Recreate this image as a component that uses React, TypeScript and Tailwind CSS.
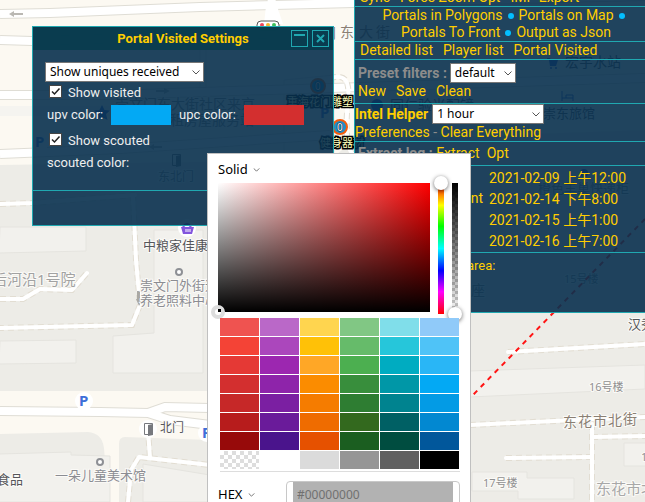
import React from 'react';

const ROBOTO = "font-['Roboto','Noto_Sans_CJK_SC',sans-serif]";
const NOTO = "font-['Noto_Sans','Noto_Sans_CJK_SC',sans-serif]";

type Label = { x: number; y: number; t: string; s?: number; c?: string };

const labels: Label[] = [
  { x: 115, y: 109, t: '崇文门东大街社区来京', s: 14 },
  { x: 170, y: 125, t: '租房屋服务站', s: 14 },
  { x: 158, y: 181, t: '东北门', s: 12 },
  { x: 565, y: 67, t: '宏宇水站', s: 14, c: '#55565a' },
  { x: 390, y: 110, t: '同仁验光配镜', s: 14, c: '#55565a' },
  { x: 543, y: 118, t: '崇东旅馆', s: 13, c: '#55565a' },
  { x: 538, y: 193, t: '橙色羊巢快递柜', s: 13 },
  { x: 564, y: 283, t: '15号楼', s: 11 },
  { x: 471, y: 295, t: '座', s: 14 },
  { x: 143, y: 250, t: '中粮家佳康', s: 13, c: '#55565a' },
  { x: 140, y: 290, t: '崇文门外街道', s: 13, c: '#8b8c92' },
  { x: 140, y: 305, t: '养老照料中心', s: 13, c: '#8b8c92' },
  { x: -8, y: 285, t: '后河沿1号院', s: 15, c: '#a2a2a2' },
  { x: 160, y: 432, t: '北门', s: 12, c: '#55565a' },
  { x: -3, y: 484, t: '食品', s: 13, c: '#55565a' },
  { x: 55, y: 480, t: '一朵儿童美术馆', s: 13, c: '#8b8c92' },
  { x: 628, y: 329, t: '汉秀', s: 13, c: '#55565a' },
  { x: 589, y: 391, t: '16号楼', s: 11 },
  { x: 483, y: 487, t: '17号楼', s: 11 },
  { x: 641, y: 461, t: '18号楼', s: 11 },
  { x: 596, y: 494, t: '东花市北里', s: 15, c: '#a8a8a8' },
];

const streetGlyphs: Label[] = [
  { x: 322, y: 38, t: '门', s: 14 },
  { x: 340, y: 37, t: '东', s: 14 },
  { x: 359, y: 37, t: '大', s: 14 },
  { x: 376, y: 37, t: '街', s: 14 },
  { x: 563, y: 427, t: '东', s: 14 },
  { x: 578, y: 426, t: '花', s: 14 },
  { x: 593, y: 426, t: '市', s: 14 },
  { x: 608, y: 425, t: '北', s: 14 },
  { x: 623, y: 424, t: '街', s: 14 },
];

const roads = [
  'M0 14 L50 13 L200 7 L354 3 L645 -4',
  'M0 40 L32 41 L330 32',
  'M0 95 L110 95 L645 78',
  'M0 154 L120 149 L330 135',
  'M0 411 L100 412 L148 413 L165 407 L210 408',
  'M148 413 L170 420 L210 425',
  'M271 -4 L276 30',
];

const paths = [
  'M0 204 L32 203 L135 195',
  'M133 195 L136 260 L140 305 L132 325 L0 328',
  'M0 299 L23 299 L40 289 L72 290 L87 273',
  'M148 430 L150 458',
  'M128 502 L131 470 L139 457 L210 465',
  'M470 425 L575 420 L645 417',
  'M508 352 L645 344',
  'M592 424 L592 502',
  'M506 458 L592 457',
  'M592 437 L645 436',
  'M330 78 C345 74 350 80 348 100 S345 150 354 155',
];

function CityMap() {
  return (
    <svg
      className={`absolute inset-0 size-full ${NOTO}`}
      viewBox="0 0 645 502"
      preserveAspectRatio="xMinYMin slice"
      aria-label="Map"
    >
      <rect width="645" height="502" fill="#edece7" />
      <path d="M0 0 H645 V130 L354 140 L330 160 L0 165Z" fill="#fcf9f2" />
      <path d="M0 106 L110 106 V116 H0Z" fill="#f5f4f0" />
      <path d="M0 391 H210 V440 L125 437 Q119 437 119 444 V502 H108 L104 448 Q102 433 88 432 L0 434Z" fill="#fcf9f2" />
      <g fill="#f2f1ed" stroke="#e5e4df">
        <path d="M0 227 H86 V251 L-1 253Z" />
        <path d="M0 341 L76 340 V363 L-1 364Z" />
        <path d="M113 336 L154 333 V230 H203 V373 H113Z" />
        <path d="M-1 454 L71 452 V455 L110 456 V502 H-1Z" />
        <path d="M470 371 L645 365 V389 L470 397Z" />
        <path d="M472 472 H527 V478 H574 V499 H518 V491 H472Z" />
        <path d="M646 443 H624 V466 H646Z" />
        <path d="M143 464 L210 475 V502 H143Z" />
        <path d="M284 80 L334 75 V160 H284Z M200 40 V95 M206 40 V95" fill="none" />
      </g>
      <g fill="none" stroke="#dfddd5" strokeWidth="10">
        {roads.map((d) => <path key={d} d={d} />)}
      </g>
      <g fill="none" stroke="#ffffff" strokeWidth="8">
        {roads.map((d) => <path key={d} d={d} />)}
      </g>
      <g fill="none" stroke="#e2ddd2" strokeWidth="6" strokeDasharray="6 4">
        {paths.map((d) => <path key={d} d={d} />)}
      </g>
      <g fill="none" stroke="#ffffff" strokeWidth="4" strokeLinecap="round" strokeLinejoin="round">
        {paths.map((d) => <path key={d} d={d} />)}
      </g>
      <path d="M264 24 L266 6 H277 L283 24Z" fill="#fff" />

      <path d="M23 13 H14 V11 L9 14 L14 17 V15 H23Z" fill="#bab8b3" />
      <path d="M156 90 H164 V88 L170 91 L164 94 V92 H156Z" fill="#bab8b3" />
      <path d="M162 146 H154 V144 L149 147 L154 150 V148 H162Z" fill="#bab8b3" />
      <path d="M137 291 H140 V299 H143 L139 306 L136 299 H137Z" fill="#aaa8a3" />

      <path d="M102 105 L104.500 110 L110 110.500 L106 114 L107.500 120 L102 117 L96.500 120 L98 114 L94 110.500 L99.500 110Z" fill="#2f5fd0" />
      <rect x="257" y="21" width="22" height="9" rx="4" fill="#fff" stroke="#555" />
      <circle cx="262" cy="25" r="2" fill="#f0455a" />
      <circle cx="268" cy="25" r="2" fill="#f5b52c" />
      <circle cx="274" cy="25" r="2" fill="#3fbf5b" />

      <g fill="#fff">
        <circle cx="187" cy="228" r="9" />
        <circle cx="84" cy="401" r="9" />
        <circle cx="148" cy="429" r="9" />
        <circle cx="207" cy="433" r="9" />
        <circle cx="40" cy="142" r="9" />
      </g>
      <path d="M181 227 H194 L192 234 H183Z" fill="#8356dd" />
      <path d="M183 227 Q187 221 191 227" fill="none" stroke="#8356dd" strokeWidth="2" />
      <path d="M186 229 V232 M188 229 V232 M190 229 V232" stroke="#fff" />
      <g fill="#3d6fd8" fontSize="15" fontWeight="700">
        <text x="79" y="406">P</text>
        <text x="202" y="438">P</text>
        <text x="35" y="147">P</text>
        <text x="320" y="118">P</text>
      </g>
      <g fill="none" stroke="#77797e">
        <path d="M144.500 423.500 H152.500 V434.500 H144.500Z" />
        <path d="M172.500 154.500 H180.500 V165.500 H172.500Z" />
      </g>
      <path d="M148 425 L153 424 V435 L148 436Z M176 156 L181 155 V166 L176 167Z" fill="#77797e" />
      <g fill="#fff" stroke="#8e9095" strokeWidth="2">
        <circle cx="179" cy="272" r="3" />
        <circle cx="100" cy="462" r="3" />
      </g>
      <g fill="#2f5fd0">
        <circle cx="377" cy="105" r="6" />
        <path d="M547 58 H550 L551 60 H558 L556 66 H550 L549 60 H547Z" />
        <circle cx="551" cy="68" r="1" />
        <circle cx="556" cy="68" r="1" />
        <circle cx="584" cy="173" r="4" />
      </g>
      <path d="M562 91 V101 M562 98 H573 V101 M573 98 V95 H566 V98" fill="none" stroke="#2f5fd0" strokeWidth="1" />

      <g stroke="#fbfaf7" strokeWidth="2" paintOrder="stroke">
        {labels.map((l) => (
          <text key={l.t} x={l.x} y={l.y} fontSize={l.s} fill={l.c ?? '#909090'}>{l.t}</text>
        ))}
        {streetGlyphs.map((l) => (
          <text key={`${l.t}${l.x}`} x={l.x} y={l.y} fontSize={l.s} fill="#8a7f74">{l.t}</text>
        ))}
      </g>

      <g stroke="#f45c0c" strokeWidth="2" fill="#1f8fc9">
        <circle cx="318" cy="86" r="7" />
        <circle cx="340" cy="127" r="7" />
      </g>
      <g fill="#fff" stroke="#123" strokeWidth="1" paintOrder="stroke" fontSize="10">
        <text x="315" y="90">0</text>
        <text x="337" y="131">0</text>
      </g>
      <g fill="#ffffbb" stroke="#000" strokeWidth="3" paintOrder="stroke" fontSize="11">
        <text x="287" y="106">重海花门雕塑</text>
        <text x="320" y="147">健身器材</text>
      </g>
      <path d="M645 219 L470 398" stroke="#ff1414" strokeWidth="2" strokeDasharray="5 5" />
    </svg>
  );
}

function Chevron({ className }: { className: string }) {
  return (
    <svg className={`pointer-events-none absolute ${className}`} viewBox="0 0 8 5" fill="none" stroke="#555" aria-hidden="true">
      <path d="M0.500 0.500 L4 4 L7.500 0.500" />
    </svg>
  );
}

function Dropdown({ label, value, width }: { label: string; value: string; width: string }) {
  return (
    <div className={`relative h-5 ${width}`}>
      <select
        aria-label={label}
        className={`block h-5 w-full appearance-none border border-[#767676] bg-white pl-1 text-[12px] leading-4 text-black ${NOTO}`}
      >
        <option>{value}</option>
      </select>
      <Chevron className="top-2 right-1 h-[5px] w-2" />
    </div>
  );
}

function Check({ id, label }: { id: string; label: string }) {
  return (
    <div className="flex h-5 items-start gap-[6px] pl-1">
      <span className="relative mt-[2px] size-[13px]">
        <input id={id} type="checkbox" defaultChecked className="block size-[13px] appearance-none border border-[#444] bg-white" />
        <svg className="pointer-events-none absolute inset-0 size-[13px]" viewBox="0 0 13 13" fill="none" stroke="#222" strokeWidth="1.500" aria-hidden="true">
          <path d="M3 6.500 L5.500 9 L10.500 3.500" />
        </svg>
      </span>
      <label htmlFor={id} className="leading-5">{label}</label>
    </div>
  );
}

const swatchInput =
  'block h-5 w-[60px] appearance-none border-0 bg-transparent p-0 [&::-webkit-color-swatch-wrapper]:p-0 [&::-webkit-color-swatch]:rounded-none [&::-webkit-color-swatch]:border-0';

function SettingsDialog() {
  return (
    <section className={`absolute top-[26px] left-8 w-[302px] border border-[#20a8b1] bg-[rgba(8,48,78,0.9)] text-[13px] text-[#eeeeee] ${ROBOTO}`}>
      <header className="relative flex h-[23px] items-center justify-center bg-[rgba(8,60,78,0.9)]">
        <h2 className="font-bold text-[#ffce00]">Portal Visited Settings</h2>
        <div className="absolute top-[3px] right-1 flex gap-1">
          <button aria-label="Minimize" className="h-[17px] w-[17px] border border-[#20a8b1]">
            <span className="mx-auto mb-2 block h-[2px] w-[11px] bg-[#20a8b1]" />
          </button>
          <button aria-label="Close" className="flex size-[17px] items-center justify-center border border-[#20a8b1]">
            <svg className="size-[9px]" viewBox="0 0 9 9" stroke="#20a8b1" strokeWidth="2" aria-hidden="true">
              <path d="M1 1 L8 8 M8 1 L1 8" />
            </svg>
          </button>
        </div>
      </header>
      <div className="px-3 pt-3 pb-[15px]">
        <Dropdown label="Display mode" value="Show uniques received" width="w-[159px]" />
        <div className="mt-px">
          <Check id="visited" label="Show visited" />
        </div>
        <div className="flex h-6 items-center pl-[2px]">
          <label htmlFor="upv" className="w-16">upv color:</label>
          <input id="upv" type="color" defaultValue="#03a9f4" className={swatchInput} />
          <label htmlFor="upc" className="ml-2 w-[65px]">upc color:</label>
          <input id="upc" type="color" defaultValue="#d32f2f" className={swatchInput} />
        </div>
        <div className="mt-1">
          <Check id="scouted" label="Show scouted" />
        </div>
        <div className="flex h-6 items-center gap-2 pl-[2px]">
          <label htmlFor="scoutedColor">scouted color:</label>
          <button id="scoutedColor" className="h-5 w-[60px]" />
        </div>
      </div>
      <footer className="h-[35px] border-t border-[#20a8b1]" />
    </section>
  );
}

const row = 'border-b border-[#20a8b1]';

function Dot() {
  return <span className="mx-[5px] inline-block size-[6px] rounded-full bg-[#03bfff] align-middle" />;
}

const dates = ['2021-02-09 上午12:00', '2021-02-14 下午8:00', '2021-02-15 上午1:00', '2021-02-16 上午7:00'];

function Sidebar() {
  return (
    <aside className={`absolute top-0 right-0 w-[291px] border-l border-[#20a8b1] bg-[rgba(8,48,78,0.9)] text-[14px] leading-[17px] text-[#ffce00] ${ROBOTO}`}>
      <nav className={`${row} flex h-[7px] items-end gap-[10px] overflow-hidden pl-[5px] whitespace-nowrap`}>
        <a href="#">Sync</a>
        <a href="#">Force Zoom Opt</a>
        <a href="#">IMP Export</a>
      </nav>
      <nav className={`${row} pl-3 text-center whitespace-nowrap`}>
        <a href="#">Portals in Polygons</a><Dot /><a href="#">Portals on Map</a><Dot />
        <br />
        <a href="#">Portals To Front</a><Dot /><a href="#">Output as Json</a>
      </nav>
      <nav className={`${row} flex gap-[10px] pl-[5px]`}>
        <a href="#">Detailed list</a>
        <a href="#">Player list</a>
        <a href="#">Portal Visited</a>
      </nav>
      <div className={`${row} py-[3px] pl-[3px]`}>
        <div className="flex items-center gap-[3px]">
          <b className="text-[#8c8c8c]">Preset filters :</b>
          <Dropdown label="Preset filters" value="default" width="w-[66px]" />
        </div>
        <div className="flex gap-[10px]">
          <a href="#">New</a>
          <a href="#">Save</a>
          <a href="#">Clean</a>
        </div>
      </div>
      <div className={row}>
        <div className="flex items-center gap-1">
          <b>Intel Helper</b>
          <Dropdown label="Intel Helper" value="1 hour" width="w-[112px]" />
        </div>
        <div>
          <a href="#">Preferences</a> <span className="text-[#8c8c8c]">-</span> <a href="#">Clear Everything</a>
        </div>
      </div>
      <div className={`${row} flex gap-[7px] py-[3px] pl-[3px]`}>
        <span><b className="text-[#8c8c8c]">Extract log :</b> <a href="#">Extract</a></span>
        <a href="#">Opt</a>
      </div>
      <div className={`${row} pt-[2px]`}>
        <table className="border-collapse">
          <tbody>
            {dates.map((d, i) => (
              <tr key={d} className="h-[21px]">
                {i === 0 && (
                  <td rowSpan={4} className="w-[134px] p-0 pr-[6px] pb-6 text-right">nt</td>
                )}
                <td className="p-0 whitespace-nowrap">{d}</td>
              </tr>
            ))}
          </tbody>
        </table>
      </div>
      <div className={`${row} h-[60px] pt-1 pl-[112px] text-[13px]`}>area:</div>
    </aside>
  );
}

const swatches = [
  'bg-[#ef5350]', 'bg-[#ba68c8]', 'bg-[#ffd54f]', 'bg-[#81c784]', 'bg-[#80deea]', 'bg-[#90caf9]',
  'bg-[#f44336]', 'bg-[#ab47bc]', 'bg-[#ffc107]', 'bg-[#66bb6a]', 'bg-[#26c6da]', 'bg-[#4fc3f7]',
  'bg-[#e53935]', 'bg-[#9c27b0]', 'bg-[#ffa726]', 'bg-[#4caf50]', 'bg-[#00acc1]', 'bg-[#29b6f6]',
  'bg-[#d32f2f]', 'bg-[#8e24aa]', 'bg-[#fb8c00]', 'bg-[#388e3c]', 'bg-[#0097a7]', 'bg-[#03a9f4]',
  'bg-[#c62828]', 'bg-[#7b1fa2]', 'bg-[#f57c00]', 'bg-[#2e7d32]', 'bg-[#00838f]', 'bg-[#039be5]',
  'bg-[#b71c1c]', 'bg-[#6a1b9a]', 'bg-[#ef6c00]', 'bg-[#33691e]', 'bg-[#006064]', 'bg-[#0288d1]',
  'bg-[#970a0a]', 'bg-[#4a148c]', 'bg-[#e65100]', 'bg-[#1b5e20]', 'bg-[#004d40]', 'bg-[#01579b]',
  'bg-[repeating-conic-gradient(#dddddd_0_25%,#ffffff_0_50%)] bg-[length:8px_8px]',
  'bg-white', 'bg-[#dbdbdb]', 'bg-[#969696]', 'bg-[#606060]', 'bg-black',
];

const slider =
  'absolute -left-1 -top-[7px] h-[145px] w-[14px] appearance-none bg-transparent [writing-mode:vertical-lr] [&::-webkit-slider-thumb]:size-[14px] [&::-webkit-slider-thumb]:appearance-none [&::-webkit-slider-thumb]:rounded-full [&::-webkit-slider-thumb]:bg-white [&::-webkit-slider-thumb]:shadow-[0_1px_4px_rgba(0,0,0,0.6)]';

const modeSelect = 'block appearance-none bg-transparent pr-4 text-[13px] leading-5 text-black';

function ColorPicker() {
  return (
    <section className={`absolute top-[153px] left-[207px] w-[264px] border border-[#c0c0c0] bg-white px-[10px] pb-5 ${NOTO}`}>
      <div className="flex h-[29px] items-center">
        <span className="relative">
          <select aria-label="Fill type" className={modeSelect}><option>Solid</option></select>
          <Chevron className="top-[9px] right-1 h-1 w-[7px]" />
        </span>
      </div>
      <div className="flex h-[131px] items-start">
        <div className="relative h-[129px] w-[212px] bg-[linear-gradient(to_top,#000,transparent),linear-gradient(to_right,#fff,#f00)]">
          <span className="absolute -bottom-[7px] -left-[7px] size-[14px] rounded-full border-4 border-[#dddddd] bg-white" />
          <span className="absolute bottom-0 left-0 h-[3px] w-[3px] bg-black" />
        </div>
        <div className="relative ml-2 h-[131px] w-[6px] bg-[linear-gradient(to_bottom,#f00,#ff0_17%,#0f0_33%,#0ff_50%,#00f_67%,#f0f_83%,#f00)]">
          <input aria-label="Hue" type="range" min="0" max="360" defaultValue="0" className={slider} />
        </div>
        <div className="relative ml-2 h-[131px] w-[6px] bg-[linear-gradient(to_bottom,#000,transparent),repeating-conic-gradient(#cccccc_0_25%,#ffffff_0_50%)] bg-[length:100%_100%,6px_6px]">
          <input aria-label="Transparency" type="range" min="0" max="100" defaultValue="100" className={slider} />
        </div>
      </div>
      <div className="relative mt-1 ml-[2px] grid w-[240px] grid-cols-6 border-b border-[#dddddd] pb-px">
        {swatches.map((c) => (
          <button key={c} aria-label="Swatch" className={`mr-px mb-px h-[18px] ${c}`} />
        ))}
      </div>
      <div className="mt-[9px] flex items-center justify-between">
        <span className="relative">
          <select aria-label="Colour format" className={modeSelect}><option>HEX</option></select>
          <Chevron className="top-[9px] right-1 h-1 w-[7px]" />
        </span>
        <div className="w-[174px] rounded-sm border border-[#c8c8c8] px-[6px]">
          <input
            aria-label="Colour value"
            placeholder="#00000000"
            className="block h-6 w-full bg-[#b2b2b2] pl-1 text-[12px] text-black placeholder:text-[#707070]"
          />
        </div>
      </div>
    </section>
  );
}

export default function App() {
  return (
    <main className="relative h-screen w-full overflow-hidden">
      <CityMap />
      <SettingsDialog />
      <Sidebar />
      <ColorPicker />
    </main>
  );
}
